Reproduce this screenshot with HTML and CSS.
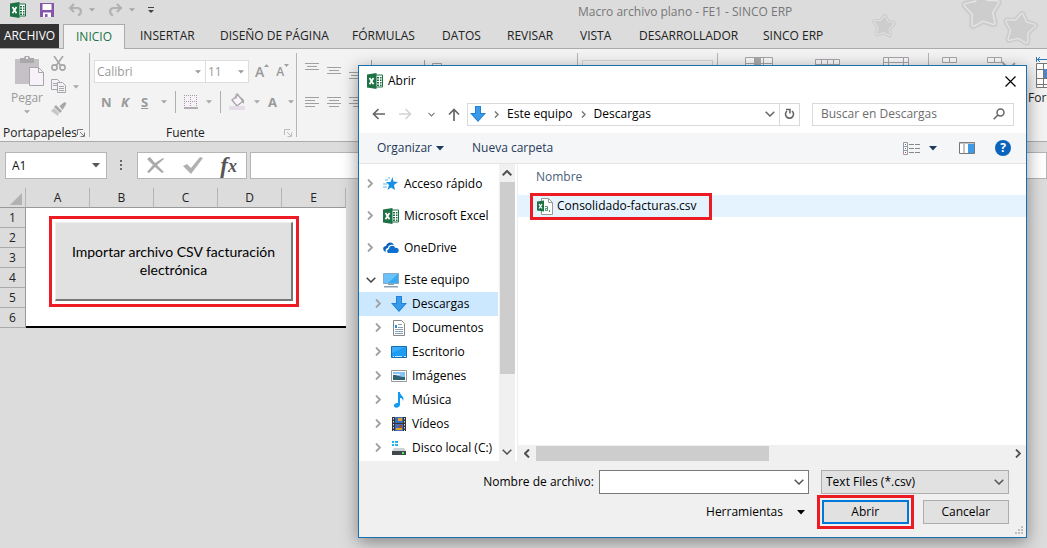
FILE: index.html
```html
<!DOCTYPE html>
<html lang="es">
<head>
<meta charset="utf-8">
<title>Macro archivo plano - FE1 - SINCO ERP</title>
<link rel="stylesheet" href="styles.css">
</head>
<body>
<svg class="defs" aria-hidden="true">
  <symbol id="excel" viewBox="0 0 16 16"><path d="M8 2h7.500v12H8z" fill="#fff" stroke="#1e7145"/><path d="M10 4h2v1.500h-2zM13 4h1.500v1.500H13zM10 6.500h2V8h-2zM13 6.500h1.500V8H13zM10 9h2v1.500h-2zM13 9h1.500v1.500H13zM10 11.500h2V13h-2zM13 11.500h1.500V13H13z" fill="#1e7145"/><path d="M0 1.500 9.500 0v16L0 14.500z" fill="#1e7145"/><path d="m2.500 5 4 6.200M6.500 5l-4 6.200" stroke="#fff" stroke-width="1.700"/></symbol>
  <symbol id="down" viewBox="0 0 8 5"><path d="M0 0h8L4 4.500z" fill="currentColor"/></symbol>
  <symbol id="right" viewBox="0 0 6 9"><path d="m1 .5 4 4-4 4" fill="none" stroke="currentColor" stroke-width="1.800"/></symbol>
  <symbol id="chev" viewBox="0 0 10 6"><path d="m.7.700 4.300 4.300L9.300.7" fill="none" stroke="currentColor" stroke-width="1.500"/></symbol>
  <symbol id="arrow" viewBox="0 0 16 16"><path d="M5 0h6v7h5l-8 9-8-9h5z" fill="#1f84d8"/><path d="M6 1h4v7h3.600L8 14.400 2.400 8H6z" fill="#3a9aea"/></symbol>
  <symbol id="launch" viewBox="0 0 8 8"><path d="M.5 6V.5H6M3 3l4 4M7.500 3.500v4h-4" fill="none" stroke="currentColor"/></symbol>
</svg>

<main class="excel">
  <header class="titlebar">
    <div class="quick">
      <svg width="16" height="16"><use href="#excel"/></svg>
      <button aria-label="Guardar"><svg width="14" height="14"><path d="M0 0h14v14H0z" fill="#8555ab"/><path d="M2.500 1h9v6h-9zM3 9.500h8V14H3z" fill="#fff"/><path d="M5 11h2.500v3H5z" fill="#8555ab"/></svg></button>
      <button aria-label="Deshacer"><svg width="15" height="14" fill="none" stroke="#b2b2b2" stroke-width="2.200"><path d="M6 1 2 5l4 4M2 5h7c5 0 5 6 1 7.500"/></svg></button>
      <svg class="tiny" width="6" height="4"><use href="#down"/></svg>
      <button aria-label="Rehacer"><svg width="15" height="14" fill="none" stroke="#b2b2b2" stroke-width="2.200"><path d="m9 1 4 4-4 4M13 5H6C1 5 1 11 5 12.500"/></svg></button>
      <svg class="tiny" width="6" height="4"><use href="#down"/></svg>
      <button aria-label="Personalizar"><svg width="6" height="7"><path d="M0 0h6v1H0zM0 3h6L3 6z" fill="#444"/></svg></button>
    </div>
    <h1>Macro archivo plano - FE1 - SINCO ERP</h1>
    <svg class="stars" width="180" height="48" viewBox="0 0 180 48" stroke-linejoin="round">
      <defs><path id="star" d="M0-10 3.600-4 11-3 6 3.500 7 11 0 8-7 11-6 3.500-11-3-3.600-4z"/></defs>
      <g stroke="#cdcdcd" stroke-width="6" fill="#cdcdcd"><use href="#star" transform="translate(17 25) scale(.85) rotate(5)"/><use href="#star" transform="translate(115 8) scale(1.450) rotate(-5)"/><use href="#star" transform="translate(153 27) scale(1.250) rotate(9)"/></g>
      <g stroke="#e4e4e4" stroke-width="3" fill="#cdcdcd"><use href="#star" transform="translate(17 25) scale(.85) rotate(5)"/><use href="#star" transform="translate(115 8) scale(1.450) rotate(-5)"/><use href="#star" transform="translate(153 27) scale(1.250) rotate(9)"/></g>
      <g stroke="#cdcdcd" stroke-width="1" fill="#cdcdcd"><use href="#star" transform="translate(17 25) scale(.85) rotate(5)"/><use href="#star" transform="translate(115 8) scale(1.450) rotate(-5)"/><use href="#star" transform="translate(153 27) scale(1.250) rotate(9)"/></g>
    </svg>
  </header>

  <nav class="tabs">
    <button class="file">ARCHIVO</button>
    <button class="active">INICIO</button>
    <button class="first">INSERTAR</button>
    <button>DISEÑO DE PÁGINA</button>
    <button>FÓRMULAS</button>
    <button>DATOS</button>
    <button>REVISAR</button>
    <button>VISTA</button>
    <button>DESARROLLADOR</button>
    <button>SINCO ERP</button>
  </nav>

  <section class="ribbon">
    <div class="group clipboard">
      <div class="group-body">
        <button class="paste">
          <svg width="29" height="30"><path d="M0 3h24v25H0z" fill="#c6c1c6"/><path d="M5 2h4c0-3 6-3 6 0h4v5H5z" fill="#a9a9a9"/><path d="M11 1h2v2h-2z" fill="#f3f3f3"/><path d="M14.500 11.500h9l5 5v13h-14z" fill="#f7f2f9" stroke="#a6a6a6"/><path d="M23.500 11.500v5h5" fill="none" stroke="#a6a6a6"/></svg>
          <span>Pegar</span>
          <svg class="tiny" width="6" height="4"><use href="#down"/></svg>
        </button>
        <div class="clip-tools">
          <button aria-label="Cortar"><svg width="15" height="15" fill="none" stroke="#a6a6a6" stroke-width="1.600"><path d="m3 0 7 10M12 0 5 10"/><circle cx="3.500" cy="11.500" r="2.600"/><circle cx="11.500" cy="11.500" r="2.600"/></svg></button>
          <button aria-label="Copiar"><svg width="16" height="15" fill="#f7f2f9" stroke="#a6a6a6"><path d="M.5.500h6l2 2v8h-8z"/><path d="M2 4.500h4M2 6.500h4"/><path d="M6.500 3.500h5l3 3v7h-8z"/><path d="M8 7.500h5M8 9.500h5M8 11.500h5"/></svg><svg class="tiny" width="6" height="4"><use href="#down"/></svg></button>
          <button aria-label="Copiar formato"><svg width="16" height="14"><path d="m15.500 1.500-2-1.500-5 4 3 4z" fill="#a6a6a6"/><path d="m5 3 6 6-2 2-6-6z" fill="#a9a9a9"/><path d="m3 6 5 5-1 3-7-5z" fill="#ccc5c5"/></svg></button>
        </div>
      </div>
      <footer><span>Portapapeles</span><svg class="dark" width="8" height="8"><use href="#launch"/></svg></footer>
    </div>

    <div class="group font">
      <div class="font-row">
        <span class="pick family"><select aria-label="Fuente"><option>Calibri</option></select><svg width="6" height="4"><use href="#down"/></svg></span>
        <span class="pick size"><select aria-label="Tamaño"><option>11</option></select><svg width="6" height="4"><use href="#down"/></svg></span>
        <button class="grow" aria-label="Aumentar">A<svg width="5" height="3"><path d="M0 3h5L2.500 0z" fill="#a0a0a0"/></svg></button>
        <button class="shrink" aria-label="Disminuir">A<svg width="5" height="3"><path d="M0 0h5L2.500 3z" fill="#a0a0a0"/></svg></button>
      </div>
      <div class="font-row style-row">
        <button><b>N</b></button><button><b><i>K</i></b></button><button><b><u>S</u></b></button>
        <svg class="tiny" width="6" height="4"><use href="#down"/></svg><i class="bar"></i>
        <button aria-label="Bordes"><svg width="14" height="14"><path d="M0 0h13v13H0z" fill="#f7f0f9"/><path d="M0 .5h14M0 6.500h14M.5 0v12M6.500 0v12M12.500 0v12" stroke="#a0a0a0" stroke-dasharray="1 1"/><path d="M0 13h14" stroke="#999" stroke-width="1.500"/></svg></button>
        <svg class="tiny" width="6" height="4"><use href="#down"/></svg><i class="bar"></i>
        <button aria-label="Relleno"><svg width="17" height="17"><path d="m3 7 6-5 5 6-6 5z" fill="#f8f4fa" stroke="#a6a6a6" stroke-width="1.300"/><path d="M7 6V1h2v2" fill="none" stroke="#a6a6a6"/><path d="m12 4 3 3v4l-2-2z" fill="#a6a6a6"/><path d="M0 13h16v4H0z" fill="#e4dce6"/></svg></button>
        <svg class="tiny" width="6" height="4"><use href="#down"/></svg>
        <button class="color"><b>A</b></button>
        <svg class="tiny" width="6" height="4"><use href="#down"/></svg>
      </div>
      <footer><span>Fuente</span><svg width="8" height="8"><use href="#launch"/></svg></footer>
    </div>

    <div class="group align">
      <svg width="270" height="60" viewBox="0 0 270 60" fill="none" stroke="#a0a0a0">
        <path d="M0 7.500h14M2 10.500h10M0 13.500h14M22 11.500h14M24 14.500h10M22 17.500h14M44 16.500h14M46 19.500h10M44 22.500h14M0 41.500h14M0 44.500h10M0 47.500h14M0 50.500h10M22 41.500h14M24 44.500h10M22 47.500h14M24 50.500h10M44 41.500h14M48 44.500h10M44 47.500h14M48 50.500h10M66.500 4v50M119.500 4v50M127.500 20V7.500h9V20"/>
      </svg>
    </div>
    <div class="group number"><i class="number-box"></i></div>
    <div class="group styles">
      <svg width="28" height="18"><path d="M.5.500h27v17H.5zM0 6.500h28M9.500 0v18M18.500 0v18" fill="#fbf8fb" stroke="#a6a6a6"/><path d="M10 1h6v16h-6z" fill="#aaa"/></svg>
      <svg width="26" height="18"><path d="M.5 2.500h24v15H.5zM0 7.500h25M6.500 2v6M12.500 2v6M18.500 2v6" fill="#fbf8fb" stroke="#a6a6a6"/></svg>
      <svg width="27" height="18"><path d="M.5.500h25v17H.5zM0 5.500h26M5.500 0v18M20.500 0v18" fill="#fbf8fb" stroke="#a6a6a6"/></svg>
    </div>
    <div class="group cells">
      <svg width="15" height="18"><path d="M.5.500h14v5H.5zM7.500 0v6" fill="#fbf8fb" stroke="#a6a6a6"/></svg>
      <svg width="29" height="18"><path d="M.5.500h14v5H.5zM7.500 0v6" fill="#fbf8fb" stroke="#a6a6a6"/><path d="m15 5 10 10M28 6l-8 8" stroke="#a6a6a6" stroke-width="2"/></svg>
      <button class="format"><svg width="32" height="32"><path d="M.5 0v5M1 2.500h10M4 0 1.500 2.500 4 5" fill="none" stroke="#2e75b6"/><path d="M.5 6.500h30v24H.5zM0 12.500h31M0 21.500h31M0 27.500h31M7.500 6v25M23.500 6v25" fill="#fff" stroke="#777"/><path d="M8 12h15v9H8z" fill="#4e86c6"/></svg><span>Formato</span></button>
    </div>
  </section>

  <section class="formula">
    <label class="namebox"><input aria-label="Cuadro de nombres" value="A1"><svg width="8" height="5"><use href="#down"/></svg></label>
    <svg class="dots" width="2" height="11"><path d="M0 0h2v2H0zM0 4h2v2H0zM0 8h2v2H0z" fill="#666"/></svg>
    <div class="fx">
      <button aria-label="Cancelar entrada"><svg width="18" height="17" fill="#aaa"><path d="M0 2 3 0l5 6 8-5 1 1-7 6 7 7-2 1-7-6-6 6-2-1 6-7z"/></svg></button>
      <button aria-label="Introducir"><svg width="20" height="17" fill="#b0b0b0"><path d="m0 9 4-2 4 4L17 0l3 1L8 17z"/></svg></button>
      <button class="fn" aria-label="Insertar función"><i>f</i><i>x</i></button>
    </div>
    <input class="formula-input" aria-label="Barra de fórmulas">
  </section>

  <table class="sheet">
    <thead><tr><th class="corner"><svg width="12" height="12"><path d="M12 0v12H0z" fill="#b2b2b2"/></svg></th><th>A</th><th>B</th><th>C</th><th>D</th><th>E</th></tr></thead>
    <tbody>
      <tr><th>1</th><td colspan="5" rowspan="6"><button class="import marked">Importar archivo CSV facturación electrónica</button></td></tr>
      <tr><th>2</th></tr><tr><th>3</th></tr><tr><th>4</th></tr><tr><th>5</th></tr><tr><th>6</th></tr>
    </tbody>
  </table>
</main>

<section class="dialog" role="dialog" aria-labelledby="dlg-title">
  <header class="dlg-title">
    <svg width="16" height="16"><use href="#excel"/></svg>
    <h2 id="dlg-title">Abrir</h2>
    <button aria-label="Cerrar"><svg width="11" height="11" stroke="#000" stroke-width="1.200"><path d="m.5.500 10 10M10.500.500l-10 10"/></svg></button>
  </header>

  <div class="address-row">
    <button aria-label="Atrás"><svg width="13" height="12" fill="none" stroke="#666" stroke-width="1.700"><path d="M13 6H1.500M6.500 1l-5 5 5 5"/></svg></button>
    <button aria-label="Adelante"><svg width="13" height="12" fill="none" stroke="#d4d4d4" stroke-width="1.600"><path d="M0 6h11.500M6.500 1l5 5-5 5"/></svg></button>
    <button aria-label="Recientes"><svg class="mini" width="7" height="5"><use href="#chev"/></svg></button>
    <button aria-label="Subir"><svg width="12" height="13" fill="none" stroke="#666" stroke-width="1.700"><path d="M6 13V1.500M1 6.500l5-5 5 5"/></svg></button>
    <div class="address">
      <svg width="16" height="16"><use href="#arrow"/></svg>
      <svg class="sep" width="5" height="7"><use href="#right"/></svg>
      <a href="#equipo">Este equipo</a>
      <svg class="sep" width="5" height="7"><use href="#right"/></svg>
      <a href="#descargas">Descargas</a>
      <svg class="open" width="10" height="6"><use href="#chev"/></svg>
      <button class="refresh" aria-label="Actualizar"><svg width="11" height="12" fill="none" stroke="#666" stroke-width="1.600"><path d="M8 3a4 4 0 1 1-5 0M2 1.500h4v4"/></svg></button>
    </div>
    <label class="search"><input placeholder="Buscar en Descargas" aria-label="Buscar en Descargas"><svg width="12" height="12" fill="none" stroke="#666" stroke-width="1.500"><circle cx="7.500" cy="4.500" r="3.500"/><path d="M5 7 .7 11.300"/></svg></label>
  </div>

  <div class="toolbar">
    <button>Organizar <svg width="8" height="5"><use href="#down"/></svg></button>
    <button class="new">Nueva carpeta</button>
    <button class="view" aria-label="Vista"><svg width="17" height="13"><path d="M.5.500h4v12h-4zM0 4.500h4M0 8.500h4" fill="#fff" stroke="#999"/><path d="M6 2.500h11M6 6.500h11M6 10.500h11" stroke="#888" stroke-dasharray="5 1"/><path d="M2 2h1v1H2zM2 6h1v1H2z" fill="#2677c9"/><path d="M2 10h1v1H2z" fill="#d33"/></svg><svg width="8" height="5"><use href="#down"/></svg></button>
    <button aria-label="Panel de vista previa"><svg width="16" height="12"><path d="M.5.500h15v11H.5z" fill="#fff" stroke="#777"/><path d="M0 1h16M5 2v10" stroke="#888"/><path d="M9 2h6v9H9z" fill="#3b9be9"/></svg></button>
    <button class="help" aria-label="Ayuda">?</button>
  </div>

  <div class="browser">
    <ul class="tree">
      <li><svg class="exp" width="6" height="9"><use href="#right"/></svg><svg width="16" height="16"><path d="m9.500 1 1 4.500 4.500.5-4 3 1 5-4-2.500L4.500 14 6 9 3 6h4.500z" fill="#1791e3"/><path d="M2 4h3M0 8h4M0 11h4M5 2h2" stroke="#58b7f0"/></svg>Acceso rápido</li>
      <li><svg class="exp" width="6" height="9"><use href="#right"/></svg><svg width="16" height="16"><use href="#excel"/></svg>Microsoft Excel</li>
      <li><svg class="exp" width="6" height="9"><use href="#right"/></svg><svg width="16" height="16"><path d="M1 11C-1 8 1 6 3 6c1-4 6-5 8-1-5-1-6 2-6 3-2 0-3 2-2 4z" fill="#0d64c0"/><path d="M5 13c-2-2 0-4 1-4 0-4 6-4 6-1 4-1 5 4 2 5z" fill="#0d6fd0"/></svg>OneDrive</li>
      <li><svg class="exp open" width="10" height="6"><use href="#chev"/></svg><svg width="16" height="16"><path d="M.5 1.500h15v10H.5z" fill="#39a9f2" stroke="#83abc7"/><path d="M1 2h14L5 11H1z" fill="#69c3fa"/><path d="M5 12h6v1H5zM1 14h14v1.500H1z" fill="#8ba0b0"/></svg>Este equipo
        <ul>
          <li class="selected"><svg class="exp" width="6" height="9"><use href="#right"/></svg><svg width="16" height="16"><use href="#arrow"/></svg>Descargas</li>
          <li><svg class="exp" width="6" height="9"><use href="#right"/></svg><svg width="16" height="16"><path d="M2.500.500h8l3 3v12h-11z" fill="#fff" stroke="#888"/><path d="M7 4.500h4M7 7.500h5M4 9.500h8M4 11.500h8M4 13.500h8" stroke="#8aa2b5"/><path d="M4 5h2v3H4z" fill="#2a91dd"/></svg>Documentos</li>
          <li><svg class="exp" width="6" height="9"><use href="#right"/></svg><svg width="16" height="16"><path d="M.5 2.500h15v11H.5z" fill="#1e9bf5" stroke="#126fb5"/><path d="m1 9 13-6H1z" fill="#3bacf8"/><path d="M2 12.500h1m1 0h7m2 0h2" stroke="#c7e6ff"/></svg>Escritorio</li>
          <li><svg class="exp" width="6" height="9"><use href="#right"/></svg><svg width="16" height="16"><path d="M.5 2.500h15v11H.5z" fill="#fff" stroke="#999"/><path d="M2 4h12v8H2z" fill="#8bc3ee"/><path d="M2 7c5 0 6 2 12 2v3H2z" fill="#2f6273"/><path d="M2 6h7v1H2z" fill="#e3f1fa"/></svg>Imágenes</li>
          <li><svg class="exp" width="6" height="9"><use href="#right"/></svg><svg width="16" height="16"><path d="M7 0h2c0 4 5 4 3 9-.5-3-2-3-3-3v7c-1 4-7 3-6 0 1-2 3-2 4-2z" fill="#159af2"/></svg>Música</li>
          <li><svg class="exp" width="6" height="9"><use href="#right"/></svg><svg width="16" height="16"><path d="M1 1h14v14H1z" fill="#333"/><path d="M2.500 2v13M13.500 2v13" stroke="#ddd" stroke-dasharray="1.500 1.500"/><path d="M4 1h8v6H4zM4 8h8v7H4z" fill="#3c6fc1"/><path d="M7 2h4v3H7zM5 12h6v2H5z" fill="#dca72d"/><path d="M8 9h3v3H8z" fill="#a5473c"/></svg>Vídeos</li>
          <li><svg class="exp" width="6" height="9"><use href="#right"/></svg><svg width="16" height="16"><path d="M1 1h2v2H1zM4 1h3v2H4zM1 4h2v2H1zM4 4h3v2H4z" fill="#20b4ec"/><path d="M3 8h10l2 3H1z" fill="#cdd3d6"/><path d="M1 11h14v4H1z" fill="#41484c"/><path d="M11 12h2v2h-2z" fill="#4ff05e"/></svg>Disco local (C:)</li>
        </ul>
      </li>
    </ul>
    <div class="vscroll"><svg width="10" height="6"><path d="M.7 5.300 5 1l4.300 4.300" fill="none" stroke="#505050" stroke-width="2"/></svg><i></i><svg width="10" height="6"><use href="#chev"/></svg></div>
    <div class="files">
      <table>
        <thead><tr><th>Nombre</th></tr></thead>
        <tbody><tr><td><span class="file-name marked"><svg width="16" height="17"><path d="M4.500.500h7l4 4v12h-11z" fill="#fff" stroke="#999"/><path d="M11.500.500v4h4" fill="none" stroke="#999"/><path d="M0 3.500 7 2.500v11L0 12.500z" fill="#1e7145"/><path d="m2 6 3 4.500M5 6l-3 4.500" stroke="#fff" stroke-width="1.300"/><path d="M8 8.500h2.500v4H8.500v-2h2M12.500 12v2" fill="none" stroke="#4c9b6c"/></svg>Consolidado-facturas.csv</span></td></tr></tbody>
      </table>
      <div class="hscroll"><svg width="6" height="9"><path d="m5 .5-4 4 4 4" fill="none" stroke="#505050" stroke-width="2"/></svg><i></i><svg width="6" height="9"><use href="#right"/></svg></div>
    </div>
  </div>

  <footer class="actions">
    <label for="fname">Nombre de archivo:</label>
    <div class="combo fname"><input id="fname"><svg width="10" height="6"><use href="#chev"/></svg></div>
    <div class="combo type"><select aria-label="Tipo de archivo"><option>Text Files (*.csv)</option></select><svg width="10" height="6"><use href="#chev"/></svg></div>
    <button class="tools">Herramientas <svg width="8" height="5"><use href="#down"/></svg></button>
    <div class="buttons"><button class="push primary marked">Abrir</button><button class="push">Cancelar</button></div>
    <svg class="grip" width="8" height="8" fill="#bfbfbf"><path d="M6 0h2v2H6zM3 3h2v2H3zM6 3h2v2H6zM0 6h2v2H0zM3 6h2v2H3zM6 6h2v2H6z"/></svg>
  </footer>
</section>
</body>
</html>
```
FILE: styles.css
```css
* { box-sizing: border-box; }
body { margin: 0; height: 100vh; overflow: hidden; background: #dcdcdc; color: #111; font: 12px/16px "Open Sans", "Noto Sans", sans-serif; }
button, input, select { font: inherit; color: inherit; margin: 0; }
button { padding: 0; border: 0; background: none; display: flex; align-items: center; }
input, select { min-width: 0; border: 0; outline: 0; background: none; appearance: none; border-radius: 0; }
svg { flex: none; display: block; }
h1, h2 { margin: 0; font: inherit; }
ul { margin: 0; padding: 0; list-style: none; }
table { border-collapse: collapse; }
.defs { position: absolute; width: 0; height: 0; }
.marked { outline: 3px solid #ed1c24; }
.tiny { color: #a6a6a6; }

/* Window */
.excel { min-height: 100vh; overflow: hidden; }
.titlebar { position: relative; display: flex; height: 24px; padding-left: 10px; align-items: center; }
.quick { display: flex; width: 568px; align-items: center; padding-bottom: 4px; }
.quick > * { margin-right: 6px; }
.quick > svg:first-child, .quick > button:nth-child(2) { margin-right: 14px; }
.quick > .tiny { margin-right: 13px; }
.titlebar h1 { color: #777; white-space: nowrap; }
.stars { position: absolute; top: 0; right: 0; }
.tabs { position: relative; display: grid; grid-template-columns: 59px 66px 95px 132px 90px 65px 73px 59px 124px 1fr; height: 25px; border-bottom: 1px solid #ababab; }
.tabs button { height: 24px; white-space: nowrap; color: #222; }
.tabs .file { background: #333; color: #fff; justify-content: center; }
.tabs .active { height: 25px; margin-left: 4px; justify-content: center; background: #f3f3f3; border: 1px solid #ababab; border-bottom: 0; color: #217346; }
.tabs .first { padding-left: 15px; }

/* Ribbon */
.ribbon { display: flex; height: 93px; padding: 4px 0; background: #f3f3f3; border-bottom: 1px solid #ababab; color: #999; }
.group { display: flex; flex: none; flex-direction: column; border-right: 1px solid #b5b5b5; }
.group footer { display: flex; margin-top: auto; height: 16px; margin-bottom: -4px; align-items: center; padding: 0 4px 0 3px; justify-content: space-between; color: #222; }
.group footer svg { color: #bbb; }
.group footer .dark { color: #777; }
.clipboard { width: 90px; }
.group-body { display: flex; padding: 3px 0 0 10px; gap: 6px; }
.paste { flex-direction: column; width: 34px; gap: 4px; }
.paste svg:first-child { margin-left: 4px; }
.clip-tools { display: flex; flex-direction: column; gap: 8px; padding-left: 1px; }
.clip-tools button { gap: 6px; }
.font { width: 207px; padding: 7px 0 0 4px; }
.font-row { display: flex; height: 23px; align-items: center; }
.pick { display: flex; height: 23px; align-items: center; border: 1px solid #ddd; background: #fff; padding: 0 4px 0 2px; color: #999; }
.pick select { flex: 1; padding: 0; }
.family { width: 112px; }
.size { width: 43px; border-left: 0; }
.grow, .shrink { align-items: flex-start; font-weight: 600; font-size: 14px; margin-left: 6px; }
.shrink { font-size: 12px; margin-left: 7px; }
.style-row { gap: 8px; padding-left: 7px; margin-top: 7px; font-size: 13px; }
.style-row button { min-width: 12px; }
.bar { width: 1px; height: 22px; background: #b0b0b0; }
.font footer { padding-left: 72px; }
.align { width: 281px; padding: 3px 0 0 8px; }
.number { width: 140px; padding: 7px 4px; }
.number-box { height: 22px; border: 1px solid #d5d5d5; }
.styles { width: 211px; padding: 4px 18px 0 27px; flex-direction: row; justify-content: space-between; }
.cells { padding: 4px 0 0 13px; flex-direction: row; gap: 30px; border: 0; }
.format { flex-direction: column; color: #222; align-self: flex-start; margin-left: -18px; gap: 1px; }

/* Formula bar */
.formula { display: flex; align-items: center; padding: 10px 0 0 5px; height: 37px; }
.namebox, .fx, .formula-input { height: 27px; border: 1px solid #b5b5b5; background: #fff; display: flex; align-items: center; }
.namebox { width: 102px; padding: 0 6px; color: #555; }
.namebox input { flex: 1; padding: 0; color: #111; }
.dots { margin: 0 15px 0 13px; }
.fx { width: 110px; padding: 0 9px; justify-content: space-between; }
.fn { font: bold 23px/22px "Liberation Serif", serif; color: #555; }
.fn i:last-child { font-size: 18px; }
.formula-input { flex: 1; margin-left: 3px; }

/* Sheet */
.sheet { margin-top: 9px; table-layout: fixed; width: 346px; border-collapse: separate; border-spacing: 0; }
.sheet th { height: 20px; padding: 0; font-weight: 400; border-bottom: 1px solid #ababab; color: #222; }
.sheet thead th { border-right: 1px solid #b5b5b5; border-bottom-color: #999; }
.sheet .corner { width: 26px; }
.corner svg { margin: 2px 0 0 10px; }
.sheet tbody th { border-right: 1px solid #999; }
.sheet td { padding: 14px 0 0 29px; vertical-align: top; background: #fff; border-bottom: 2px solid #000; }
.import { width: 238px; height: 79px; justify-content: center; padding: 0 10px; text-align: center; background: #e1e1e1; border: 1px solid #eee; border-right: 2px solid #777; border-bottom: 2px solid #777; outline-offset: 3px; font: 14px/18px Lato, "Open Sans", sans-serif; color: #000; }

/* Dialog window */
.dialog { position: absolute; top: 65px; right: 20px; bottom: 10px; left: 358px; display: flex; flex-direction: column; background: #fff; border: 1px solid #1a6fb0; box-shadow: 0 4px 16px rgba(0, 0, 0, .4); color: #000; }
.dlg-title { display: flex; align-items: center; gap: 5px; height: 30px; padding: 0 10px 0 8px; }
.dlg-title button { margin-left: auto; }
.address-row { display: flex; align-items: center; height: 36px; margin-bottom: 1px; padding: 0 12px 0 13px; }
.address-row > button { width: 27px; }
.address-row > button:nth-child(3) { margin-left: 2px; width: 20px; }
.address-row > button:nth-child(4) { width: 20px; }
.mini { color: #777; }
.address { flex: 1; min-width: 0; display: flex; align-items: center; height: 23px; border: 1px solid #d9d9d9; padding-left: 2px; margin-left: -1px; }
.address a { color: #000; text-decoration: none; white-space: nowrap; }
.sep { color: #777; margin: 0 8px 0 8px; }
.address .open { margin: 0 4px 0 auto; color: #666; }
.refresh { width: 20px; height: 21px; justify-content: center; border-left: 1px solid #d9d9d9; }
.search { width: 202px; display: flex; align-items: center; height: 23px; margin-left: 12px; border: 1px solid #d9d9d9; padding: 0 8px; }
.search input { flex: 1; width: 0; padding: 0; }
.search input::placeholder { color: #6d6d6d; opacity: 1; }
.toolbar { display: flex; align-items: center; height: 31px; padding: 0 15px 0 18px; background: #f5f6f7; border-bottom: 1px solid #e5e5e5; color: #1e395b; }
.toolbar button { gap: 4px; white-space: nowrap; }
.toolbar .new { margin-left: 28px; }
.toolbar .view { gap: 9px; margin: 0 22px 0 auto; }
.toolbar .help { width: 16px; height: 16px; margin-left: 20px; border-radius: 50%; background: #0a63bd; color: #fff; justify-content: center; font-weight: 700; }
.browser { display: flex; flex: 1; min-height: 0; }
.tree { width: 139px; flex: none; padding-top: 8px; }
.tree > li { margin-bottom: 8px; padding-left: 8px; }
.tree li { line-height: 24px; white-space: nowrap; }
.tree li > svg { display: inline-block; vertical-align: middle; margin: -2px 5px 0 0; }
.tree li > .exp { margin-right: 10px; color: #a0a0a0; }
.tree li > .exp.open { margin: -2px 7px 0 -1px; color: #444; }
.tree ul { margin-left: -8px; }
.tree ul li { padding-left: 16px; }
.tree .selected { background: #cce8ff; }
.vscroll { display: flex; flex-direction: column; align-items: center; justify-content: space-between; width: 17px; padding: 6px 0; background: #f0f0f0; border-left: 1px solid #fff; color: #505050; }
.vscroll i { width: 15px; height: 192px; margin: 6px 0 auto; background: #cdcdcd; }
.files { flex: 1; display: flex; flex-direction: column; margin-left: 2px; border-left: 1px solid #eee; }
.files table { width: 100%; }
.files th { height: 31px; padding: 0 0 5px 18px; text-align: left; font-weight: 400; color: #4c607a; }
.files td { height: 22px; padding: 0 0 0 15px; background: #e5f3ff; }
.file-name { display: flex; width: 176px; height: 21px; padding-left: 4px; gap: 4px; align-items: center; }
.hscroll { display: flex; align-items: center; height: 16px; margin-top: auto; padding: 0 5px 0 6px; background: #f0f0f0; color: #505050; justify-content: space-between; }
.hscroll i { height: 15px; width: 233px; margin: 0 auto 0 6px; background: #cdcdcd; }
.actions { position: relative; display: grid; grid-template-columns: 240px minmax(0, 210fr) minmax(0, 200fr); row-gap: 6px; padding: 9px 17px 13px 0; background: #f0f0f0; }
.actions label { text-align: right; padding: 4px 5px 0 0; }
.combo { display: flex; align-items: center; height: 24px; padding: 0 4px; }
.combo input, .combo select { flex: 1; height: 100%; padding: 0; }
.fname { background: #fff; border: 1px solid #7a7a7a; }
.type { margin-left: 12px; background: #e1e1e1; border: 1px solid #adadad; }
.combo svg { color: #555; }
.tools { grid-column: 2; justify-self: end; gap: 14px; padding-right: 4px; }
.buttons { display: grid; grid-template-columns: 1fr 1fr; gap: 14px; padding-left: 13px; }
.push { height: 24px; justify-content: center; background: #e1e1e1; border: 1px solid #adadad; }
.primary { border: 2px solid #0078d7; outline-offset: 2px; }
.grip { position: absolute; right: 3px; bottom: 3px; }
```
